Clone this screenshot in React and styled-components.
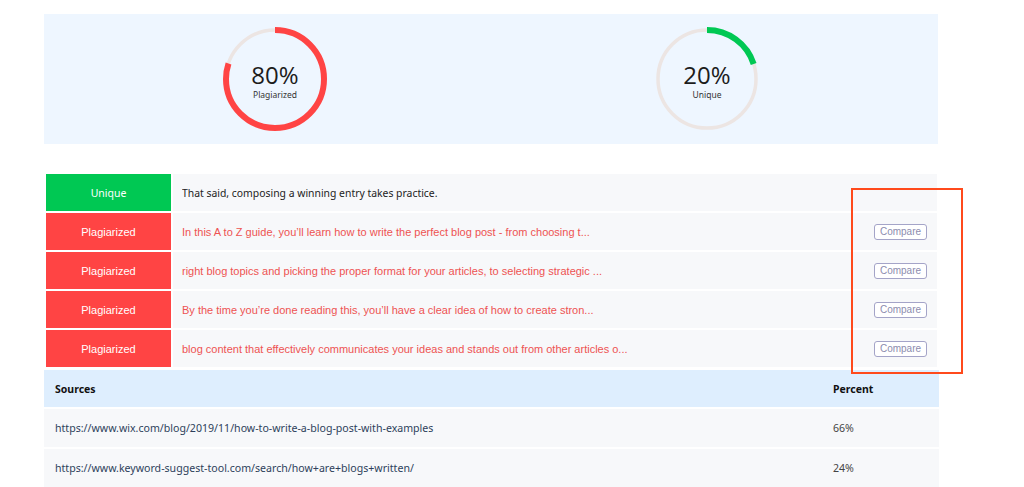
import React from "react";
import styled, { createGlobalStyle } from "styled-components";

const Global = createGlobalStyle`
  html, body { margin: 0; padding: 0; background: #ffffff; }
  body { font-family: "Noto Sans", "Open Sans", sans-serif; }
  * { box-sizing: border-box; }
`;

const Page = styled.div`
  position: relative;
  width: 1024px;
  height: 487px;
  overflow: hidden;
  padding: 14px 0 0 44px;
`;

const Summary = styled.section`
  width: 894px;
  height: 130px;
  background: #eef6ff;
  display: grid;
  grid-template-columns: 1fr 1fr;
  padding: 0 15px;
  align-items: center;
`;

const Gauge = styled.div`
  position: relative;
  width: 104px;
  height: 104px;
  justify-self: center;
`;

const GaugeLabel = styled.div`
  position: absolute;
  inset: 0;
  display: flex;
  flex-direction: column;
  align-items: center;
  justify-content: center;
  padding-top: 5px;
`;

const Big = styled.div`
  font-family: "Open Sans", "Noto Sans", sans-serif;
  font-weight: 400;
  font-size: 24px;
  line-height: 26px;
  color: #1c1c1c;
`;

const Small = styled.div`
  font-size: 8.5px;
  line-height: 12px;
  color: #333;
  margin-top: 1px;
`;

const Ring = ({ pct, color }) => {
  const r = 49;
  const c = 2 * Math.PI * r;
  return (
    <svg width="104" height="104" viewBox="0 0 104 104">
      <circle cx="52" cy="52" r={r} fill="none" stroke="#ece5e3" strokeWidth="3.5" />
      <circle
        cx="52"
        cy="52"
        r={r}
        fill="none"
        stroke={color}
        strokeWidth="6"
        strokeDasharray={`${(c * pct) / 100} ${c}`}
        transform="rotate(-90 52 52)"
      />
    </svg>
  );
};

const Results = styled.div`
  margin-top: 28px;
  width: 895px;
  padding: 2px 2px 0 2px;
  display: flex;
  flex-direction: column;
  gap: 2px;
`;

const Row = styled.div`
  display: grid;
  grid-template-columns: 125px 1fr;
  gap: 2px;
  height: 37px;
`;

const Tag = styled.div`
  background: ${(p) => (p.$unique ? "#00c853" : "#ff4444")};
  color: #fff;
  display: flex;
  align-items: center;
  justify-content: center;
  font-family: ${(p) => (p.$unique ? `"Noto Sans", sans-serif` : `"Liberation Sans", Arial, sans-serif`)};
  font-size: ${(p) => (p.$unique ? "10.5px" : "11px")};
`;

const Sentence = styled.div`
  background: #f7f8fa;
  display: flex;
  align-items: center;
  padding: 0 10px 0 9px;
  gap: 12px;
`;

const SentenceText = styled.span`
  flex: 1;
  white-space: nowrap;
  overflow: hidden;
  font-family: ${(p) => (p.$unique ? `"Noto Sans", sans-serif` : `"Liberation Sans", Arial, sans-serif`)};
  font-size: ${(p) => (p.$unique ? "10.4px" : "11px")};
  color: ${(p) => (p.$unique ? "#222" : "#ee5352")};
`;

const Compare = styled.button`
  width: 53px;
  height: 16px;
  padding: 0;
  border: 1px solid #a4a4c8;
  border-radius: 3px;
  background: #fff;
  color: #8c8cae;
  font-family: "Liberation Sans", Arial, sans-serif;
  font-size: 10px;
  line-height: 14px;
`;

const Sources = styled.div`
  width: 895px;
  margin-top: 3px;
  display: flex;
  flex-direction: column;
  gap: 2px;
`;

const SourceRow = styled.div`
  display: grid;
  grid-template-columns: 1fr 117px;
  height: ${(p) => (p.$head ? "37px" : "38px")};
  background: ${(p) => (p.$head ? "#deeefe" : "#f7f8fa")};
  align-items: center;
  font-size: ${(p) => (p.$head ? "10.5px" : "10.6px")};
  font-weight: ${(p) => (p.$head ? 700 : 400)};
  color: ${(p) => (p.$head ? "#111" : "#2d3f5a")};
`;

const Cell = styled.div`
  padding: 0 11px;
  white-space: nowrap;
  color: ${(p) => (p.$muted ? "#444" : "inherit")};
`;

const Highlight = styled.div`
  position: absolute;
  left: 851px;
  top: 188px;
  width: 112px;
  height: 186px;
  border: 2px solid #ff4a1c;
  pointer-events: none;
`;

const rows = [
  { unique: true, text: "That said, composing a winning entry takes practice." },
  { text: "In this A to Z guide, you\u2019ll learn how to write the perfect blog post - from choosing t..." },
  { text: "right blog topics and picking the proper format for your articles, to selecting strategic ..." },
  { text: "By the time you\u2019re done reading this, you\u2019ll have a clear idea of how to create stron..." },
  { text: "blog content that effectively communicates your ideas and stands out from other articles o..." },
];

const sources = [
  { url: "https://www.wix.com/blog/2019/11/how-to-write-a-blog-post-with-examples", pct: "66%" },
  { url: "https://www.keyword-suggest-tool.com/search/how+are+blogs+written/", pct: "24%" },
];

export default function App() {
  return (
    <Page>
      <Global />
      <Summary>
        <Gauge>
          <Ring pct={80} color="#ff4444" />
          <GaugeLabel>
            <Big>80%</Big>
            <Small>Plagiarized</Small>
          </GaugeLabel>
        </Gauge>
        <Gauge>
          <Ring pct={20} color="#00c853" />
          <GaugeLabel>
            <Big>20%</Big>
            <Small>Unique</Small>
          </GaugeLabel>
        </Gauge>
      </Summary>

      <Results>
        {rows.map((r, i) => (
          <Row key={i}>
            <Tag $unique={r.unique}>{r.unique ? "Unique" : "Plagiarized"}</Tag>
            <Sentence>
              <SentenceText $unique={r.unique}>{r.text}</SentenceText>
              {!r.unique && <Compare>Compare</Compare>}
            </Sentence>
          </Row>
        ))}
      </Results>

      <Sources>
        <SourceRow $head>
          <Cell>Sources</Cell>
          <Cell>Percent</Cell>
        </SourceRow>
        {sources.map((s, i) => (
          <SourceRow key={i}>
            <Cell>{s.url}</Cell>
            <Cell $muted>{s.pct}</Cell>
          </SourceRow>
        ))}
      </Sources>

      <Highlight />
    </Page>
  );
}
